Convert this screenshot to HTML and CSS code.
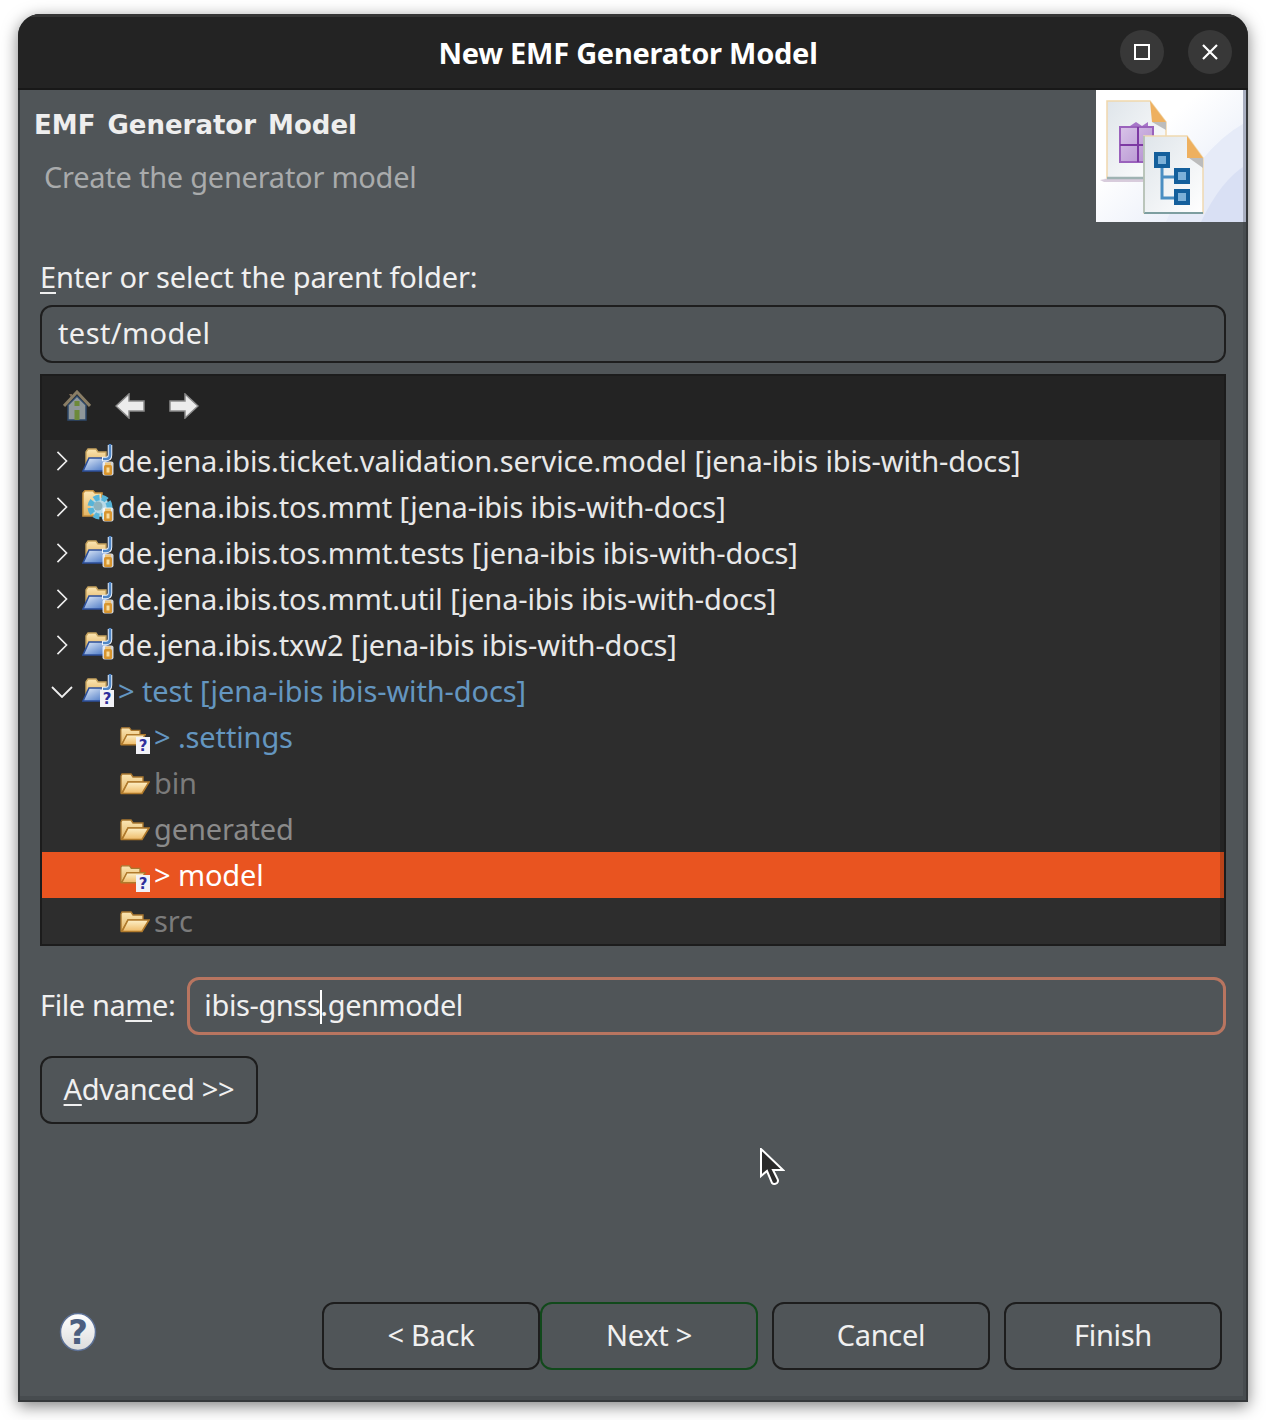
FILE: index.html
```html
<!DOCTYPE html>
<html lang="en">
<head>
    <meta charset="UTF-8">
    <title>New EMF Generator Model</title>
    <link rel="stylesheet" href="styles.css">
</head>
<body>
    <svg class="defs" width="0" height="0">
        <defs>
            <linearGradient id="folderBack" x1="0" y1="0" x2="0" y2="1">
                <stop offset="0" stop-color="#fbe6b4"/>
                <stop offset="1" stop-color="#e3b565"/>
            </linearGradient>
            <linearGradient id="folderFront" x1="0" y1="0" x2="0" y2="1">
                <stop offset="0" stop-color="#fdf0c8"/>
                <stop offset="1" stop-color="#eebb68"/>
            </linearGradient>
            <linearGradient id="projFront" x1="0" y1="0" x2="1" y2="1">
                <stop offset="0" stop-color="#e6effa"/>
                <stop offset="1" stop-color="#3a6cc0"/>
            </linearGradient>
            <linearGradient id="bannerBg" x1="0" y1="0" x2="1" y2="1">
                <stop offset="0.35" stop-color="#ffffff"/>
                <stop offset="1" stop-color="#dfe6f6"/>
            </linearGradient>
            <linearGradient id="pageBg" x1="0" y1="0" x2="1" y2="1">
                <stop offset="0" stop-color="#dfe5ea"/>
                <stop offset="1" stop-color="#ffffff"/>
            </linearGradient>
            <linearGradient id="helpBg" x1="0" y1="0" x2="0" y2="1">
                <stop offset="0" stop-color="#ffffff"/>
                <stop offset="1" stop-color="#dcdcdc"/>
            </linearGradient>
            <linearGradient id="purpleBg" x1="0" y1="0" x2="1" y2="1">
                <stop offset="0" stop-color="#d8c4e8"/>
                <stop offset="1" stop-color="#b48fd0"/>
            </linearGradient>

            <symbol id="jar" viewBox="0 0 12 15">
                <rect x="0.5" y="0.5" width="11" height="14" rx="2" fill="#fff" opacity=".8"/>
                <rect x="2" y="4" width="8" height="10" rx="1.5" fill="#d8952f"/>
                <rect x="3" y="1.5" width="6" height="2.5" fill="#f0c67c"/>
                <rect x="4.5" y="6.5" width="3" height="5" fill="#f8dc9c"/>
            </symbol>
            <symbol id="qmark" viewBox="0 0 14 17">
                <rect width="14" height="17" fill="#f2f2f6"/>
                <text x="7" y="14" text-anchor="middle" class="qmark-text">?</text>
            </symbol>
            <symbol id="folder" viewBox="0 0 30 22">
                <path d="M1 3 L2 1 H11 L13 4 H23 V9 H8 L2 20 H1 Z" fill="url(#folderBack)" stroke="#a9772f" stroke-width="1.4"/>
                <path d="M8 9 H29 L22 20.5 H2 Z" fill="url(#folderFront)" stroke="#b07a2c" stroke-width="1.6"/>
            </symbol>
            <symbol id="project" viewBox="0 0 32 32">
                <path d="M4 8 L6 5 H14 L16 8 H24 V20 H4 Z" fill="url(#folderBack)" stroke="#c6a35e" stroke-width="1.4"/>
                <path d="M7 14 H27 L21 27 H1 Z" fill="url(#projFront)" stroke="#2c4f9a" stroke-width="1.6"/>
                <path d="M28 1 V11 Q28 15 24 15 H20" fill="none" stroke="#eef3fa" stroke-width="4.5"/>
                <path d="M28 0 V11 Q28 15 24 15 H21" fill="none" stroke="#4f86c6" stroke-width="2.6"/>
            </symbol>
            <symbol id="plugin" viewBox="0 0 32 32">
                <path d="M1 3 L3 0.8 H11 L13 3 H20 V26 H1 Z" fill="url(#folderBack)" stroke="#c6913f" stroke-width="1.6"/>
                <circle cx="18" cy="17" r="9.5" fill="#b8d9e6" stroke="#56b4d8" stroke-width="6" stroke-dasharray="5.5 2.2"/>
                <circle cx="16" cy="16" r="4.5" fill="#8db2bd"/>
            </symbol>
        </defs>
    </svg>

    <div class="window">
        <header class="titlebar">
            <span class="title">New EMF Generator Model</span>
            <div class="wm-buttons">
                <button class="wm-btn"><span class="wm-max"></span></button>
                <button class="wm-btn">
                    <svg width="16" height="16" viewBox="0 0 16 16"><path d="M1 1 L15 15 M15 1 L1 15" stroke="#fff" stroke-width="2.2"/></svg>
                </button>
            </div>
        </header>

        <div class="content">
            <div class="banner">
                <div class="banner-text">
                    <h1>EMF Generator Model</h1>
                    <p class="desc">Create the generator model</p>
                </div>
                <svg class="banner-img" width="150" height="132" viewBox="0 0 150 132">
                    <rect width="150" height="132" fill="url(#bannerBg)"/>
                    <path d="M70 132 Q100 60 150 32 V132 Z" fill="#e6ebf8"/>
                    <path d="M105 132 Q125 90 150 75 V132 Z" fill="#d9e0f4"/>
                    <rect x="147" width="3" height="132" fill="#a9afc0"/>
                    <path d="M4 90 Q30 84 68 88 L60 92 H8 Z" fill="#d8ccdc"/>
                    <path d="M11 11 H54 L70 32 V88 H11 Z" fill="url(#pageBg)" stroke="#f0d7ac" stroke-width="1.5"/>
                    <path d="M11 88 H56" stroke="#9fb3b3" stroke-width="2.5"/>
                    <path d="M54 11 L70 32 H56 Z" fill="#eeb05f"/>
                    <path d="M56 32 H70 V40 Z" fill="#bcbcbc"/>
                    <path d="M34 36 L40 32 L46 36 L52 32 V38 H34 Z" fill="#a676c8"/>
                    <rect x="24" y="37" width="33" height="35" fill="url(#purpleBg)" stroke="#9a62bc" stroke-width="2"/>
                    <path d="M24 55 H57 M42 37 V72" stroke="#7d3aa3" stroke-width="2"/>
                    <path d="M48 46 H91 L107 68 V123 H48 Z" fill="url(#pageBg)" stroke="#efd9b0" stroke-width="1.5"/>
                    <path d="M48 123 H107" stroke="#7d9ea0" stroke-width="2"/>
                    <path d="M48 46 V123" stroke="#a9bdb8" stroke-width="1.5"/>
                    <path d="M91 46 L107 68 H91 Z" fill="#eeb05f"/>
                    <path d="M93 68 H107 V78 Z" fill="#bcbcbc"/>
                    <path d="M66 78 V108 H78 M66 87 H78" fill="none" stroke="#4a8ec2" stroke-width="3"/>
                    <rect x="58" y="62" width="16" height="16" fill="#145f9c"/>
                    <rect x="62" y="66" width="8" height="8" fill="#7cb0d8"/>
                    <rect x="78" y="78" width="16" height="16" fill="#145f9c"/>
                    <rect x="82" y="82" width="8" height="8" fill="#7cb0d8"/>
                    <rect x="78" y="99" width="16" height="16" fill="#145f9c"/>
                    <rect x="82" y="103" width="8" height="8" fill="#7cb0d8"/>
                </svg>
            </div>

            <div class="form">
                <label class="parent-label"><u>E</u>nter or select the parent folder:</label>
                <div class="field path">test/model</div>

                <div class="tree">
                    <div class="toolbar">
                        <svg width="28" height="32" viewBox="0 0 28 32">
                            <path d="M6 4 H9 V9 Z" fill="#7d6a55"/>
                            <path d="M5 15 V30 H23 V15 L14 6 Z" fill="#8f979a" stroke="#2f4a6b" stroke-width="1.5"/>
                            <path d="M1 16 L14 2 L27 16" fill="none" stroke="#8a7e66" stroke-width="3"/>
                            <rect x="11.5" y="11" width="5" height="5" fill="#6d8a3a"/>
                            <rect x="11.5" y="20" width="5" height="10" fill="#6d8a3a"/>
                        </svg>
                        <svg width="30" height="26" viewBox="0 0 30 26">
                            <path d="M1 13 L14 1 V8 H29 V18 H14 V25 Z" fill="#ececec" stroke="#8a8a8a" stroke-width="1.5"/>
                        </svg>
                        <svg width="30" height="26" viewBox="0 0 30 26">
                            <path d="M29 13 L16 1 V8 H1 V18 H16 V25 Z" fill="#ececec" stroke="#8a8a8a" stroke-width="1.5"/>
                        </svg>
                    </div>
                    <div class="rows">
                        <div class="row">
                            <span class="twistie"><svg class="chev" viewBox="0 0 12 22"><path d="M1 1 L11 11 L1 21"/></svg></span>
                            <span class="icon"><svg width="32" height="32"><use href="#project"/><use href="#jar" x="20" y="17" width="12" height="15"/></svg></span>
                            <span>de.jena.ibis.ticket.validation.service.model [jena-ibis ibis-with-docs]</span>
                        </div>
                        <div class="row">
                            <span class="twistie"><svg class="chev" viewBox="0 0 12 22"><path d="M1 1 L11 11 L1 21"/></svg></span>
                            <span class="icon"><svg width="32" height="32"><use href="#plugin"/><use href="#jar" x="20" y="17" width="12" height="15"/></svg></span>
                            <span>de.jena.ibis.tos.mmt [jena-ibis ibis-with-docs]</span>
                        </div>
                        <div class="row">
                            <span class="twistie"><svg class="chev" viewBox="0 0 12 22"><path d="M1 1 L11 11 L1 21"/></svg></span>
                            <span class="icon"><svg width="32" height="32"><use href="#project"/><use href="#jar" x="20" y="17" width="12" height="15"/></svg></span>
                            <span>de.jena.ibis.tos.mmt.tests [jena-ibis ibis-with-docs]</span>
                        </div>
                        <div class="row">
                            <span class="twistie"><svg class="chev" viewBox="0 0 12 22"><path d="M1 1 L11 11 L1 21"/></svg></span>
                            <span class="icon"><svg width="32" height="32"><use href="#project"/><use href="#jar" x="20" y="17" width="12" height="15"/></svg></span>
                            <span>de.jena.ibis.tos.mmt.util [jena-ibis ibis-with-docs]</span>
                        </div>
                        <div class="row">
                            <span class="twistie"><svg class="chev" viewBox="0 0 12 22"><path d="M1 1 L11 11 L1 21"/></svg></span>
                            <span class="icon"><svg width="32" height="32"><use href="#project"/><use href="#jar" x="20" y="17" width="12" height="15"/></svg></span>
                            <span>de.jena.ibis.txw2 [jena-ibis ibis-with-docs]</span>
                        </div>
                        <div class="row dirty">
                            <span class="twistie"><svg class="chev-down" viewBox="0 0 22 12"><path d="M1 1 L11 11 L21 1"/></svg></span>
                            <span class="icon"><svg width="32" height="33"><use href="#project" width="32" height="32"/><use href="#qmark" x="18" y="16" width="14" height="17"/></svg></span>
                            <span>&gt; test [jena-ibis ibis-with-docs]</span>
                        </div>
                        <div class="row child dirty">
                            <span class="icon badged"><svg width="30" height="28"><use href="#folder" width="26" height="21"/><use href="#qmark" x="16" y="11" width="14" height="17"/></svg></span>
                            <span>&gt; .settings</span>
                        </div>
                        <div class="row child derived">
                            <span class="icon"><svg width="30" height="22"><use href="#folder"/></svg></span>
                            <span>bin</span>
                        </div>
                        <div class="row child derived light">
                            <span class="icon"><svg width="30" height="22"><use href="#folder"/></svg></span>
                            <span>generated</span>
                        </div>
                        <div class="row child selected">
                            <span class="icon badged"><svg width="30" height="28"><use href="#folder" width="26" height="21"/><use href="#qmark" x="16" y="11" width="14" height="17"/></svg></span>
                            <span>&gt; model</span>
                        </div>
                        <div class="row child derived">
                            <span class="icon"><svg width="30" height="22"><use href="#folder"/></svg></span>
                            <span>src</span>
                        </div>
                    </div>
                    <div class="scrollbar"></div>
                </div>

                <div class="file-row">
                    <label class="file-label">File na<u>m</u>e:</label>
                    <div class="field focused">ibis-gnss<span class="caret"></span>.genmodel</div>
                </div>

                <button class="btn advanced"><u>A</u>dvanced &gt;&gt;</button>
            </div>

            <footer class="footer">
                <svg class="help" width="38" height="40" viewBox="0 0 38 40">
                    <ellipse cx="19" cy="20" rx="17.5" ry="18.5" fill="url(#helpBg)" stroke="#5d7196" stroke-width="1.5"/>
                    <text x="19" y="32" text-anchor="middle" class="help-text">?</text>
                </svg>
                <div class="footer-buttons">
                    <div class="btn-pair">
                        <button class="btn">&lt; Back</button>
                        <button class="btn default">Next &gt;</button>
                    </div>
                    <button class="btn">Cancel</button>
                    <button class="btn">Finish</button>
                </div>
            </footer>
        </div>

        <svg class="cursor" width="26" height="38" viewBox="0 0 26 38">
            <path d="M2 1 V28 L8 23 L13 35 Q15 37 18 35 Q20 33 18 30 L14 22 H24 Z" fill="#2a2a2a" stroke="#fff" stroke-width="2"/>
        </svg>
    </div>
</body>
</html>
```

FILE: styles.css
```css
body {
    margin: 0;
    min-height: 1420px;
    background-color: #fff;
    font-family: "Noto Sans", sans-serif;
    color: #f0f0f0;
}
u {
    text-underline-offset: 4px;
    text-decoration-thickness: 2px;
}
.defs {
    display: block;
}
.window {
    position: relative;
    width: 1230px;
    height: 1388px;
    margin: 14px 0 0 18px;
    border-radius: 22px 22px 0 0;
    background-color: #505558;
    box-shadow: 0 4px 16px rgba(0,0,0,0.5);
    overflow: hidden;
    display: flex;
    flex-direction: column;
}
.titlebar {
    height: 76px;
    flex: none;
    box-sizing: border-box;
    background-color: #232323;
    border-top: 3px solid #353535;
    border-bottom: 2px solid #181818;
    display: flex;
    align-items: center;
    justify-content: center;
    padding-right: 10px;
    position: relative;
}
.title {
    font-size: 29px;
    font-weight: 700;
    letter-spacing: -0.25px;
    color: #fff;
}
.wm-buttons {
    position: absolute;
    right: 16px;
    top: 13px;
    display: flex;
    gap: 24px;
}
.wm-btn {
    width: 44px;
    height: 44px;
    padding: 0;
    border: none;
    border-radius: 50%;
    background-color: #383838;
    display: flex;
    align-items: center;
    justify-content: center;
}
.wm-max {
    width: 12px;
    height: 12px;
    border: 2px solid #fff;
}
.content {
    flex: 1;
    display: flex;
    flex-direction: column;
    border-right: 2px solid #35383a;
    border-bottom: 2px solid #35383a;
    border-left: 2px solid #35383a;
    box-shadow: inset -3px -4px 0 rgba(0,0,0,0.1);
    min-height: 0;
}
.banner {
    height: 132px;
    flex: none;
    display: flex;
    justify-content: space-between;
}
.banner-text {
    padding: 19px 0 0 14px;
}
.banner h1 {
    margin: 0;
    font-family: "DejaVu Sans", sans-serif;
    font-size: 26px;
    font-weight: 700;
    line-height: 32px;
    color: #eeeeee;
    word-spacing: 3px;
}
.desc {
    margin: 16px 0 0 10px;
    font-size: 29px;
    line-height: 40px;
    letter-spacing: -0.25px;
    color: #a9abac;
}
.form {
    padding: 0 20px;
    display: flex;
    flex-direction: column;
    align-items: flex-start;
}
.parent-label {
    margin-top: 35px;
    font-size: 29px;
    line-height: 40px;
    letter-spacing: -0.15px;
}
.field {
    box-sizing: border-box;
    width: 100%;
    height: 58px;
    margin-top: 8px;
    padding: 0 16px;
    border: 2px solid #1e1e1e;
    border-radius: 12px;
    font-size: 29px;
    line-height: 52px;
}
.path {
    letter-spacing: 0.4px;
}
.tree {
    position: relative;
    box-sizing: border-box;
    width: 100%;
    height: 572px;
    margin-top: 11px;
    border: 2px solid #1c1c1c;
    background-color: #2d2d2d;
    overflow: hidden;
}
.toolbar {
    box-sizing: border-box;
    height: 64px;
    padding: 0 0 4px 21px;
    background-color: #232323;
    display: flex;
    align-items: center;
    gap: 24px;
}
.rows {
    margin-top: -2px;
}
.row {
    box-sizing: border-box;
    height: 46px;
    padding-bottom: 2px;
    display: flex;
    align-items: center;
    font-size: 29px;
    letter-spacing: -0.12px;
    white-space: nowrap;
    color: #e8e8e8;
}
.twistie {
    width: 40px;
    flex: none;
    margin-top: 2px;
    display: flex;
    justify-content: center;
}
.chev {
    width: 12px;
    height: 20px;
}
.chev-down {
    width: 22px;
    height: 12px;
    margin-top: 2px;
}
.chev path, .chev-down path {
    fill: none;
    stroke: #eee;
    stroke-width: 1.8;
}
.icon {
    width: 36px;
    flex: none;
    display: flex;
    align-items: center;
}
.child {
    padding-left: 78px;
}
.child .icon {
    width: 34px;
    margin-top: 3px;
}
.child .badged {
    margin-top: 7px;
}
.dirty {
    color: #6496c0;
}
.derived {
    color: #7b7b7b;
}
.light {
    color: #8a8a8a;
}
.selected {
    background-color: #e95420;
    color: #fff;
}
.scrollbar {
    position: absolute;
    right: 0;
    top: 64px;
    bottom: 0;
    width: 4px;
    background-color: rgba(0,0,0,0.2);
}
.file-row {
    width: 100%;
    display: flex;
    align-items: center;
    gap: 12px;
    margin-top: 31px;
    font-size: 29px;
    letter-spacing: -0.4px;
}
.file-label {
    margin-top: -4px;
}
.file-row .field {
    flex: 1;
    margin-top: 0;
    width: auto;
}
.focused {
    padding: 0 14px;
    border: 3px solid #b87560;
    line-height: 50px;
}
.caret {
    display: inline-block;
    width: 0;
    height: 34px;
    vertical-align: -8px;
    border-left: 2px solid #fff;
    margin-right: -2px;
}
.btn {
    box-sizing: border-box;
    width: 218px;
    height: 68px;
    padding: 0 0 4px;
    border: 2px solid #1d1d1d;
    border-radius: 12px;
    background-color: transparent;
    font-family: "Noto Sans", sans-serif;
    font-size: 29px;
    letter-spacing: -0.3px;
    color: #f0f0f0;
}
.advanced {
    margin-top: 21px;
}
.footer {
    margin-top: auto;
    padding: 0 24px 30px 39px;
    display: flex;
    justify-content: space-between;
    align-items: flex-start;
}
.help {
    margin-top: 10px;
}
.footer-buttons {
    display: flex;
    gap: 14px;
}
.btn-pair {
    display: flex;
}
.default {
    border-color: #11491b;
}
.cursor {
    position: absolute;
    left: 741px;
    top: 1134px;
}
.qmark-text {
    font-family: "DejaVu Sans", sans-serif;
    font-size: 15px;
    font-weight: 700;
    fill: #2f2f9c;
}
.help-text {
    font-family: "DejaVu Sans", sans-serif;
    font-size: 34px;
    font-weight: 700;
    fill: #4d5f80;
}
```
